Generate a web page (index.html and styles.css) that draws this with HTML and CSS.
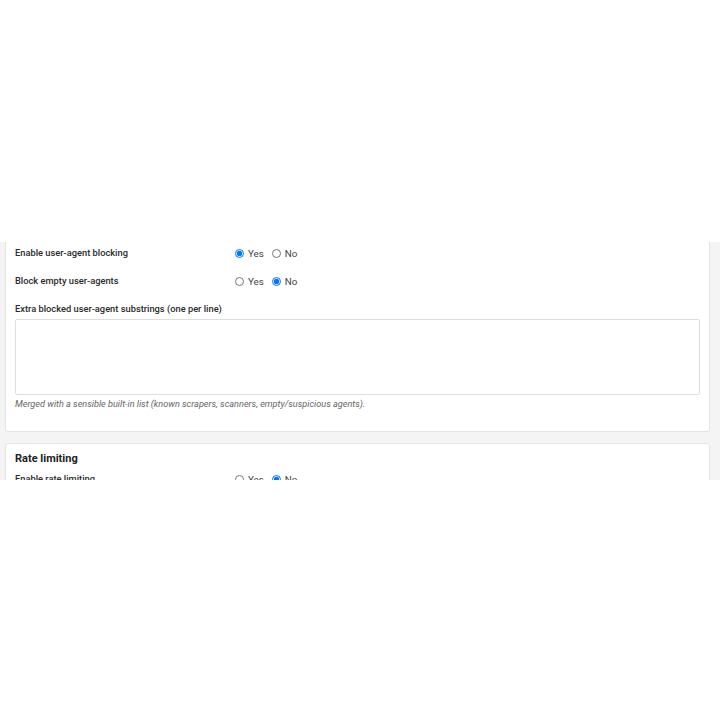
FILE: index.html
```html
<!DOCTYPE html>
<html lang="en">
<head>
<meta charset="utf-8">
<title>Security settings</title>
<link rel="stylesheet" href="styles.css">
</head>
<body>
<div class="frame">
  <section class="card card-cut">
    <div class="row">
      <span class="label">Enable user-agent blocking</span>
      <div class="choices">
        <label class="choice"><input type="radio" name="ua" checked> Yes</label>
        <label class="choice"><input type="radio" name="ua"> No</label>
      </div>
    </div>
    <div class="row">
      <span class="label">Block empty user-agents</span>
      <div class="choices">
        <label class="choice"><input type="radio" name="empty"> Yes</label>
        <label class="choice"><input type="radio" name="empty" checked> No</label>
      </div>
    </div>
    <div class="field">
      <span class="label">Extra blocked user-agent substrings (one per line)</span>
      <textarea class="area"></textarea>
      <p class="hint">Merged with a sensible built-in list (known scrapers, scanners, empty/suspicious agents).</p>
    </div>
  </section>
  <section class="card">
    <h2 class="title">Rate limiting</h2>
    <div class="row">
      <span class="label">Enable rate limiting</span>
      <div class="choices">
        <label class="choice"><input type="radio" name="rl"> Yes</label>
        <label class="choice"><input type="radio" name="rl" checked> No</label>
      </div>
    </div>
  </section>
</div>
</body>
</html>
```

FILE: styles.css
```css
body {
  margin: 0;
  background: #fff;
  font-family: Roboto, "Noto Sans", sans-serif;
  color: #2b2b2b;
}
.frame {
  margin-top: 242px;
  height: 238px;
  overflow: hidden;
  background: #f4f4f4;
  padding: 0 10px 0 5px;
}
.card {
  background: #fff;
  border: 1px solid #e4e4e4;
  border-radius: 3px;
  padding: 0 9px;
}
.card-cut {
  border-top: none;
  border-radius: 0 0 3px 3px;
  padding-top: 2px;
  padding-bottom: 20px;
  margin-bottom: 11px;
}
.row {
  display: grid;
  grid-template-columns: 220px 1fr;
  align-items: center;
  height: 18px;
  margin-bottom: 10px;
}
.label {
  font-size: 9.3px;
  font-weight: 500;
  color: #2b2b2b;
  line-height: 14px;
}
.choices {
  display: flex;
  gap: 8px;
  align-items: center;
}
.choice {
  display: flex;
  align-items: center;
  gap: 4px;
  font-size: 9.8px;
  color: #444;
}
.choice input {
  width: 9px;
  height: 9px;
  margin: 0;
}
.field {
  display: flex;
  flex-direction: column;
  margin-top: 12px;
}
.field .label {
  margin-bottom: 3px;
}
.area {
  display: block;
  height: 76px;
  box-sizing: border-box;
  border: 1px solid #dedede;
  border-radius: 2px;
  resize: none;
  margin: 0;
}
.hint {
  margin: 2px 0 0;
  font-size: 9.15px;
  line-height: 14px;
  font-style: italic;
  color: #666;
}
.title {
  margin: 7px 0 3px;
  font-size: 11px;
  line-height: 16px;
  font-weight: 700;
  color: #222;
}
```
